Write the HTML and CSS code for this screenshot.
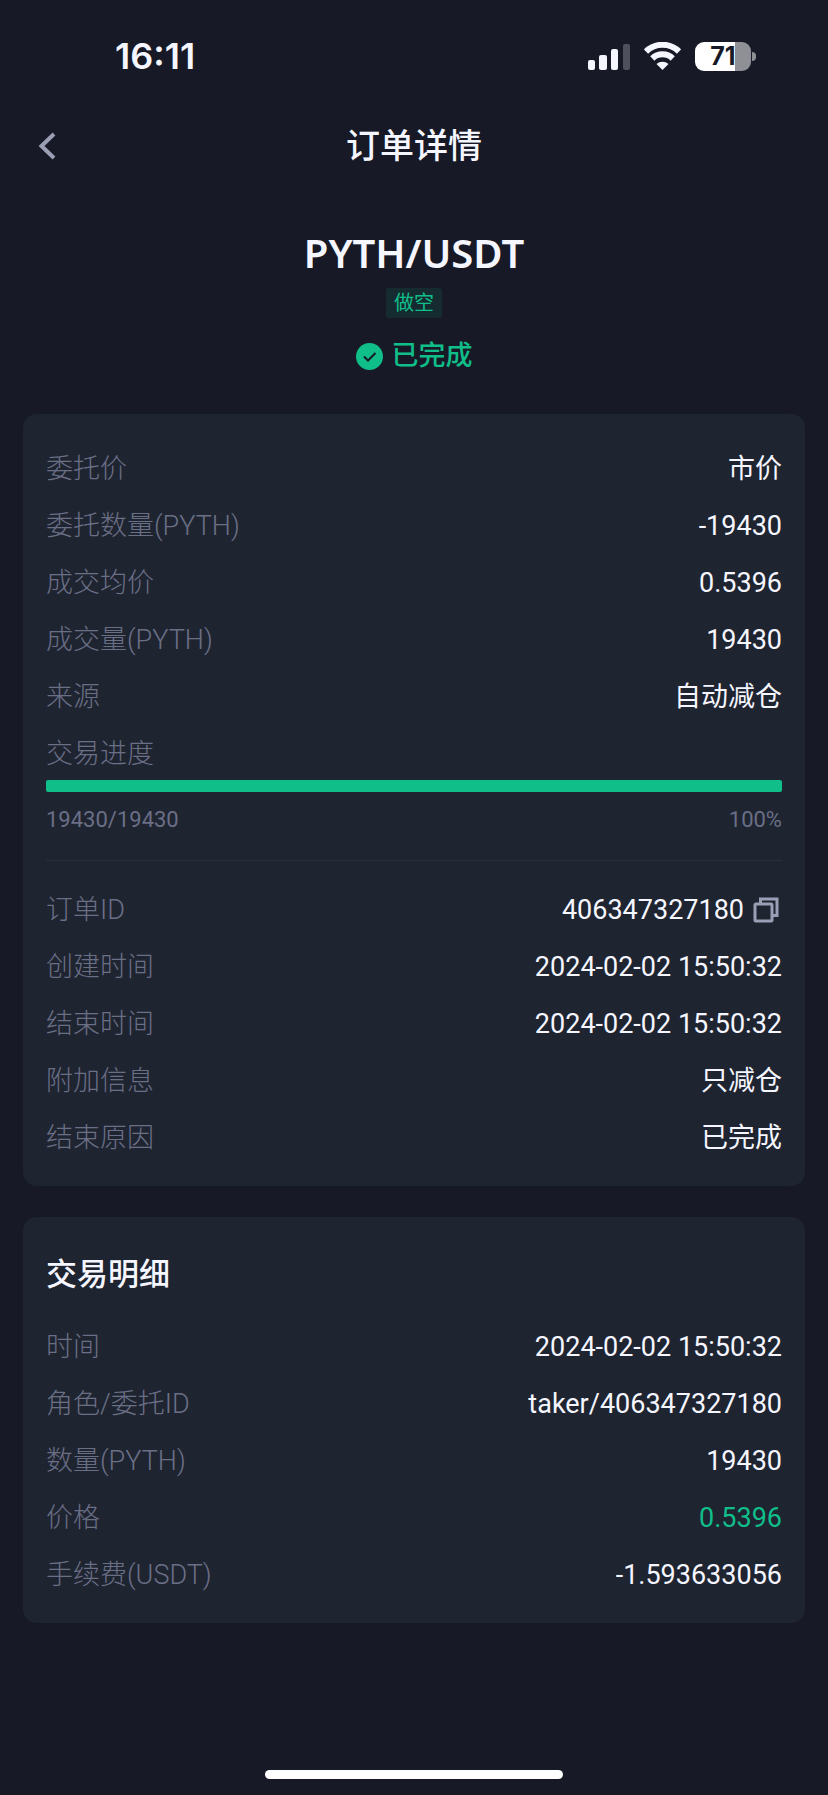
FILE: index.html
```html
<!DOCTYPE html>
<html lang="zh-CN">

<head>
    <meta charset="UTF-8">
    <meta name="viewport" content="width=device-width, initial-scale=1.0">
    <title>订单详情</title>
    <link rel="stylesheet" href="styles.css">
</head>

<body>
    <div class="status-bar">
        <span class="time">16:11</span>
        <div class="status-icons">
            <svg class="signal" width="42" height="27" viewBox="0 0 42 27">
                <rect x="0" y="17" width="7" height="10" rx="2" />
                <rect x="11" y="12" width="8" height="15" rx="2" />
                <rect x="23" y="6" width="7" height="21" rx="2" />
                <rect x="35" y="1" width="7" height="26" rx="2" opacity=".25" />
            </svg>
            <svg class="wifi" width="37" height="28" viewBox="0 0 37 28">
                <path d="M2 9.5a23.5 23.5 0 0 1 33 0" />
                <path d="M8.3 16.5a14.5 14.5 0 0 1 20.4 0" />
                <path class="dot" d="M12.5 22a8.8 8.8 0 0 1 12 0L18.5 28z" />
            </svg>
            <div class="battery"><span>71</span></div>
        </div>
    </div>

    <header class="nav">
        <button class="back" aria-label="返回">
            <svg width="18" height="28" viewBox="0 0 18 28">
                <path d="M16 2L3.5 14L16 26" />
            </svg>
        </button>
        <h1>订单详情</h1>
    </header>

    <section class="summary">
        <h2>PYTH/USDT</h2>
        <span class="tag">做空</span>
        <div class="state">
            <svg width="27" height="27" viewBox="0 0 27 27">
                <circle cx="13.5" cy="13.5" r="13.5" />
                <path d="M8 13.5L12 17.5L19.5 10" />
            </svg>
            <span>已完成</span>
        </div>
    </section>

    <main>
        <section class="card">
            <dl class="list">
                <div class="row"><dt>委托价</dt><dd>市价</dd></div>
                <div class="row"><dt>委托数量(PYTH)</dt><dd>-19430</dd></div>
                <div class="row"><dt>成交均价</dt><dd>0.5396</dd></div>
                <div class="row"><dt>成交量(PYTH)</dt><dd>19430</dd></div>
                <div class="row"><dt>来源</dt><dd>自动减仓</dd></div>
            </dl>
            <div class="progress-box">
                <label for="progress">交易进度</label>
                <progress id="progress" value="19430" max="19430"></progress>
                <div class="progress-info"><span>19430/19430</span><span>100%</span></div>
            </div>
            <hr>
            <dl class="list">
                <div class="row">
                    <dt>订单ID</dt>
                    <dd>406347327180
                        <button class="copy" aria-label="复制">
                            <svg width="26" height="26" viewBox="0 0 26 26">
                                <path d="M7.5 6V2H24V18.5H20" />
                                <rect x="2" y="7" width="17" height="17" rx="1" />
                            </svg>
                        </button>
                    </dd>
                </div>
                <div class="row"><dt>创建时间</dt><dd>2024-02-02 15:50:32</dd></div>
                <div class="row"><dt>结束时间</dt><dd>2024-02-02 15:50:32</dd></div>
                <div class="row"><dt>附加信息</dt><dd>只减仓</dd></div>
                <div class="row"><dt>结束原因</dt><dd>已完成</dd></div>
            </dl>
        </section>

        <section class="card">
            <h3>交易明细</h3>
            <dl class="list">
                <div class="row"><dt>时间</dt><dd>2024-02-02 15:50:32</dd></div>
                <div class="row"><dt>角色/委托ID</dt><dd>taker/406347327180</dd></div>
                <div class="row"><dt>数量(PYTH)</dt><dd>19430</dd></div>
                <div class="row"><dt>价格</dt><dd class="green">0.5396</dd></div>
                <div class="row"><dt>手续费(USDT)</dt><dd>-1.593633056</dd></div>
            </dl>
        </section>
    </main>

    <div class="home-bar"></div>
</body>

</html>
```

FILE: styles.css
```css
* {
    box-sizing: border-box;
    margin: 0;
    padding: 0;
}

body {
    display: flex;
    flex-direction: column;
    min-height: 100vh;
    background: #171a26;
    color: #f5f6ff;
    font-family: Roboto, "Noto Sans CJK SC", sans-serif;
    font-size: 27px;
    line-height: 37px;
}

button {
    border: none;
    background: none;
    cursor: pointer;
}

svg {
    display: block;
    fill: none;
}

/* 状态栏 */
.status-bar {
    display: flex;
    align-items: center;
    justify-content: space-between;
    height: 112px;
    padding: 0 77px 0 115px;
}

.time {
    font-family: Inter, sans-serif;
    font-size: 36px;
    font-weight: 600;
}

.status-icons {
    display: flex;
    align-items: center;
    gap: 14px;
}

.signal {
    fill: #f5f6ff;
}

.wifi {
    stroke: #f5f6ff;
    stroke-width: 6;
}

.wifi .dot {
    fill: #f5f6ff;
    stroke: none;
}

.battery {
    position: relative;
    width: 56px;
    height: 29px;
    border-radius: 9px;
    background: linear-gradient(to right, #fff 71%, #8f9095 71%);
    color: #171a26;
    font-family: Inter, sans-serif;
    font-size: 25px;
    font-weight: 700;
    line-height: 29px;
    text-align: center;
}

.battery::after {
    content: "";
    position: absolute;
    top: 10px;
    right: -5px;
    width: 4px;
    height: 9px;
    border-radius: 0 4px 4px 0;
    background: #8f9095;
}

/* 导航 */
.nav {
    display: grid;
    grid-template-columns: 60px 1fr 60px;
    align-items: center;
    height: 68px;
    padding: 0 23px;
}

.back {
    display: flex;
    padding: 0 15px;
}

.back svg {
    stroke: #9a9fb5;
    stroke-width: 4;
}

.nav h1 {
    font-size: 34px;
    font-weight: 500;
    line-height: 48px;
    text-align: center;
}

/* 概要 */
.summary {
    display: flex;
    flex-direction: column;
    align-items: center;
    padding: 47px 0 39px;
}

.summary h2 {
    font-family: "Noto Sans", sans-serif;
    font-size: 40px;
    font-weight: 600;
    line-height: 52px;
}

.tag {
    margin: 9px 0 20px;
    padding: 0 8px;
    border-radius: 3px;
    background: #152b30;
    color: #10be8a;
    font-size: 20px;
    line-height: 30px;
}

.state {
    display: flex;
    align-items: center;
    gap: 9px;
    color: #10be8a;
    font-weight: 500;
}

.state circle {
    fill: #10be8a;
}

.state path {
    stroke: #171a26;
    stroke-width: 2;
}

/* 卡片 */
main {
    display: flex;
    flex-direction: column;
    gap: 31px;
    padding: 0 23px;
}

.card {
    padding: 37px 23px 29px;
    border-radius: 14px;
    background: #1f2431;
}

.card h3 {
    margin-bottom: 33px;
    font-size: 31px;
    font-weight: 500;
    line-height: 42px;
}

.list {
    display: flex;
    flex-direction: column;
    gap: 20px;
}

.row {
    display: flex;
    justify-content: space-between;
}

.row dd {
    display: flex;
    align-items: center;
    gap: 9px;
}

dt,
label,
.progress-info {
    color: #6a6f86;
}

dt,
label {
    font-weight: 300;
}

.green {
    color: #10be8a;
}

.copy {
    padding: 0 3px 2px 0;
}

.copy svg {
    stroke: #9a9fb5;
    stroke-width: 3;
}

.progress-box {
    margin-top: 20px;
}

label,
progress {
    display: block;
}

progress {
    width: 100%;
    height: 12px;
    margin: 7px 0 13px;
    border: none;
    border-radius: 2px;
    overflow: hidden;
    appearance: none;
}

progress::-webkit-progress-bar {
    background: #2b3040;
}

progress::-webkit-progress-value {
    background: #10be8a;
}

.progress-info {
    display: flex;
    justify-content: space-between;
    font-size: 22px;
    line-height: 30px;
}

hr {
    height: 1px;
    margin: 25px 0 31px;
    border: none;
    background: #2b303d;
}

.home-bar {
    width: 36%;
    height: 9px;
    margin: auto auto 16px;
    border-radius: 5px;
    background: #fff;
}
```
